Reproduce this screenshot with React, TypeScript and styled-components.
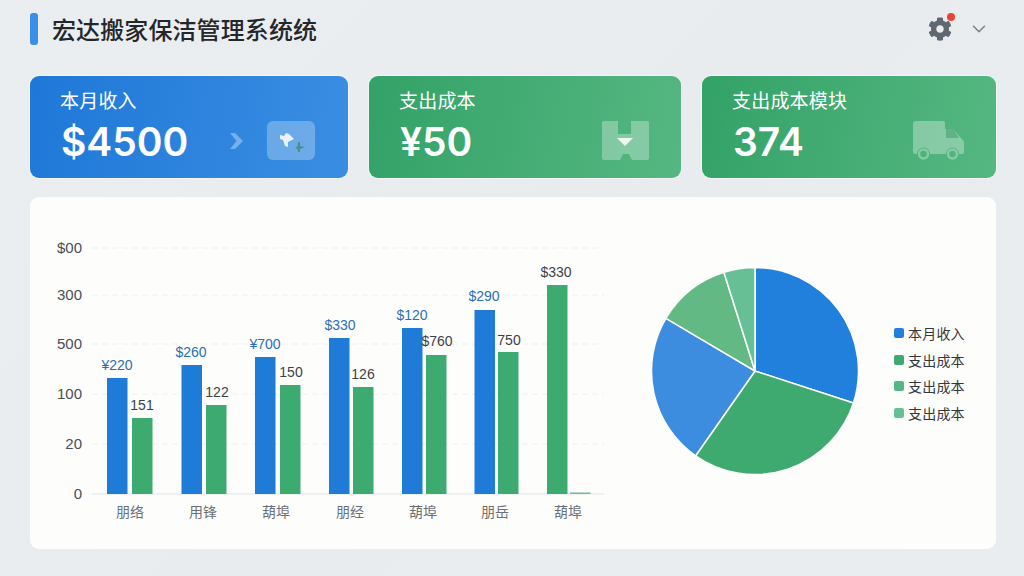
import styled, {createGlobalStyle} from "styled-components";
import {ChevronDown} from "lucide-react";
import {FaCog} from "react-icons/fa";

const GlobalStyle = createGlobalStyle`
  html, body {
    margin: 0;
    padding: 0;
    background: #e9edf0;
  }
`;

const FONT = `Inter, "Noto Sans CJK SC", sans-serif`;
const CJK = `"Noto Sans CJK SC", sans-serif`;
const CHART = `"Liberation Sans", "Noto Sans CJK SC", sans-serif`;

const Page = styled.div`
  width: 1024px;
  height: 576px;
  box-sizing: border-box;
  overflow: hidden;
  padding: 0 28px 27px 30px;
  display: flex;
  flex-direction: column;
  background: linear-gradient(135deg, #ebeef1 0%, #e8ecef 50%, #eaedf0 100%);
  font-family: ${FONT};
`;

const TopBar = styled.header`
  height: 58px;
  flex: none;
  display: flex;
  align-items: center;
  margin-bottom: 18px;
`;

const TitleMark = styled.span`
  width: 8px;
  height: 32px;
  border-radius: 3px;
  background: #3b8fe6;
  margin-right: 14px;
`;

const Title = styled.h1`
  margin: 0;
  font-family: ${CJK};
  font-size: 24px;
  font-weight: 500;
  line-height: 32px;
  letter-spacing: 0.1px;
  color: #23272b;
`;

const TopActions = styled.div`
  margin-left: auto;
  display: flex;
  align-items: center;
  gap: 15px;
  padding-right: 6px;
  color: #7a8087;
`;

const GearWrap = styled.div`
  position: relative;
  width: 26px;
  height: 26px;
  display: flex;
  align-items: center;
  justify-content: center;
  font-size: 24px;
  color: #5f6870;
`;

const Badge = styled.span`
  position: absolute;
  top: -3px;
  right: -2px;
  width: 8px;
  height: 8px;
  border-radius: 50%;
  background: #ea4335;
`;

const CardRow = styled.section`
  display: grid;
  grid-template-columns: 318px 312px 294px;
  gap: 21px;
  margin-bottom: 19px;
`;

const Card = styled.article<{$tone: "blue" | "green"; $inset: number}>`
  height: 102px;
  box-sizing: border-box;
  padding: 0 ${(p) => p.$inset}px 0 30px;
  display: flex;
  justify-content: space-between;
  border-radius: 9px;
  color: #fff;
  background: ${(p) =>
    p.$tone === "blue"
      ? "linear-gradient(100deg, #1f78d8 0%, #3a8ee2 100%)"
      : "linear-gradient(100deg, #33a267 0%, #55b781 100%)"};
  box-shadow: 0 0 0 1px rgba(255, 255, 255, 0.45);
`;

const CardText = styled.div`
  display: flex;
  flex-direction: column;
  padding-top: 10px;
`;

const CardLabel = styled.div`
  font-family: ${CJK};
  font-size: 19px;
  line-height: 28px;
  font-weight: 400;
  letter-spacing: 0.2px;
`;

const CardValue = styled.div`
  font-size: 39px;
  line-height: 48px;
  font-weight: 600;
  margin-top: 4px;
  margin-left: 1px;
`;

const CardIcons = styled.div`
  display: flex;
  align-items: center;
  gap: 24px;
  margin-top: 45px;
  height: 39px;
`;

const CardIcon = styled.svg`
  display: block;
  flex: none;
`;

const ChartPanel = styled.section`
  flex: 1;
  min-height: 0;
  display: flex;
  align-items: flex-start;
  border-radius: 9px;
  background: #fdfdfc;
`;

const BarSvg = styled.svg`
  display: block;
  flex: none;
  margin-top: 40px;
`;

const PieSvg = styled.svg`
  display: block;
  flex: none;
  margin: 69px 0 0 30px;
`;

const Legend = styled.ul`
  list-style: none;
  margin: 126px 0 0 34px;
  padding: 0;
  display: flex;
  flex-direction: column;
  gap: 6.5px;
`;

const LegendItem = styled.li`
  display: flex;
  align-items: center;
  gap: 4px;
  height: 20px;
  font-family: ${CJK};
  font-size: 14px;
  letter-spacing: 0.2px;
  color: #33383d;
`;

const Swatch = styled.span<{$color: string}>`
  width: 10px;
  height: 10px;
  border-radius: 2px;
  background: ${(p) => p.$color};
`;

const AxisLabel = styled.text`
  font-family: ${CHART};
  font-size: 15px;
  fill: #4a4f55;
  text-anchor: end;
`;

const CategoryLabel = styled.text`
  font-family: ${CJK};
  font-size: 14px;
  fill: #6a7076;
  text-anchor: middle;
`;

const ValueLabel = styled.text<{$blue?: boolean}>`
  font-family: ${CHART};
  font-size: 14px;
  fill: ${(p) => (p.$blue ? "#2a6fb5" : "#3c4146")};
  text-anchor: middle;
`;

const BLUE = "#1f7bd8";
const GREEN = "#3dab70";

// chart coordinates are relative to the panel corner (30, 197) of the page
const axisBottom = 297;
const axisTicks = [
  {label: "$00", y: 51},
  {label: "300", y: 98},
  {label: "500", y: 147},
  {label: "100", y: 197},
  {label: "20", y: 247},
  {label: "0", y: 297},
];

const bars = [
  {x: 77, top: 181, color: BLUE},
  {x: 102, top: 221, color: GREEN},
  {x: 151.5, top: 168, color: BLUE},
  {x: 176, top: 208, color: GREEN},
  {x: 225, top: 160, color: BLUE},
  {x: 250, top: 188, color: GREEN},
  {x: 299, top: 141, color: BLUE},
  {x: 323, top: 190, color: GREEN},
  {x: 372, top: 131, color: BLUE},
  {x: 396, top: 158, color: GREEN},
  {x: 444.5, top: 113, color: BLUE},
  {x: 468, top: 155, color: GREEN},
  {x: 517, top: 88, color: GREEN},
  {x: 540, top: 295.5, color: "#6cc094"},
];

const values = [
  {text: "¥220", x: 87, y: 173, blue: true},
  {text: "151", x: 112, y: 213},
  {text: "$260", x: 161, y: 160, blue: true},
  {text: "122", x: 187, y: 200},
  {text: "¥700", x: 235, y: 152, blue: true},
  {text: "150", x: 261, y: 180},
  {text: "$330", x: 310, y: 133, blue: true},
  {text: "126", x: 333, y: 182},
  {text: "$120", x: 382, y: 123, blue: true},
  {text: "$760", x: 407, y: 149},
  {text: "$290", x: 454, y: 104, blue: true},
  {text: "750", x: 479, y: 148},
  {text: "$330", x: 526, y: 80},
];

const categories = [
  {text: "朋络", x: 100},
  {text: "用锋", x: 173},
  {text: "葫埠", x: 246},
  {text: "朋经", x: 320},
  {text: "葫埠", x: 393},
  {text: "朋岳", x: 465},
  {text: "葫埠", x: 538},
];

const BarChart = () => (
  <BarSvg width={590} height={330} viewBox="0 40 590 330">
    {axisTicks.map((t) => (
      <g key={t.label}>
        <AxisLabel x={52} y={t.y + 5}>
          {t.label}
        </AxisLabel>
        {t.y !== axisBottom && (
          <line
            x1={62}
            x2={574}
            y1={t.y}
            y2={t.y}
            stroke="#f0f1ee"
            strokeDasharray="6 4"
          />
        )}
      </g>
    ))}
    <line x1={62} x2={574} y1={axisBottom} y2={axisBottom} stroke="#dfe3e6" />
    {bars.map((b) => (
      <rect
        key={b.x}
        x={b.x}
        y={b.top}
        width={20.5}
        height={axisBottom - b.top}
        fill={b.color}
      />
    ))}
    {values.map((v) => (
      <ValueLabel key={v.x} x={v.x} y={v.y} $blue={v.blue}>
        {v.text}
      </ValueLabel>
    ))}
    {categories.map((c) => (
      <CategoryLabel key={c.x} x={c.x} y={320}>
        {c.text}
      </CategoryLabel>
    ))}
  </BarSvg>
);

const slices = [
  {from: 0, to: 108, color: "#2180dc"},
  {from: 108, to: 215, color: "#3eaa70"},
  {from: 215, to: 300.6, color: "#3c8ce0"},
  {from: 300.6, to: 342.5, color: "#62b983"},
  {from: 342.5, to: 360, color: "#67c095"},
];

const slicePath = (from: number, to: number, r: number, c: number) => {
  const point = (deg: number) => {
    const a = (deg * Math.PI) / 180;
    return `${c + r * Math.sin(a)} ${c - r * Math.cos(a)}`;
  };
  const large = to - from > 180 ? 1 : 0;
  return `M${c} ${c} L${point(from)} A${r} ${r} 0 ${large} 1 ${point(to)} Z`;
};

const PieChart = () => (
  <PieSvg width={210} height={210} viewBox="0 0 210 210">
    {slices.map((s) => (
      <path
        key={s.from}
        d={slicePath(s.from, s.to, 103.5, 105)}
        fill={s.color}
        stroke="#fdfdfc"
        strokeWidth={1.5}
      />
    ))}
  </PieSvg>
);

const legend = [
  {label: "本月收入", color: "#2180dc"},
  {label: "支出成本", color: "#3eaa70"},
  {label: "支出成本", color: "#54b585"},
  {label: "支出成本", color: "#67c095"},
];

const PlaneTile = () => (
  <CardIcon width={48} height={39} viewBox="0 0 48 39">
    <rect width={48} height={39} rx={6} fill="#fff" fillOpacity={0.27} />
    <path d="M13 14l4 1 2-3 3 1 5 5-6 3v5l-3-1-2-6-3-1z" fill="#fff" fillOpacity={0.85} />
    <path d="M31 21h2v4l5 1-5 2v3h-2l-.5-3-2.500-1 2.500-1.500z" fill="#4d8f88" />
  </CardIcon>
);

const BoxTile = () => (
  <CardIcon width={47} height={39} viewBox="0 0 47 39">
    <path
      d="M2 0h14v13h13V0h16a2 2 0 0 1 2 2v35a2 2 0 0 1-2 2H30l-3-6h-6l-3 6H2a2 2 0 0 1-2-2V2a2 2 0 0 1 2-2z"
      fill="#fff"
      fillOpacity={0.3}
    />
    <path d="M15 17h16l-8 8z" fill="#fff" fillOpacity={0.85} />
  </CardIcon>
);

const TruckTile = () => (
  <CardIcon width={52} height={39} viewBox="0 0 52 39">
    <path
      d="M3 0h27a2 2 0 0 1 2 2v6h8l11 12.500V31a2 2 0 0 1-2 2h-3a6.500 6.500 0 0 0-13 0H17a6.500 6.500 0 0 0-13 0H2a2 2 0 0 1-2-2V3a3 3 0 0 1 3-3z"
      fill="#fff"
      fillOpacity={0.32}
    />
    <path d="M33 8h7l6 9H33z" fill="#3f9f6e" fillOpacity={0.55} />
    <circle cx={10.5} cy={33} r={4.5} fill="none" stroke="#fff" strokeOpacity={0.32} strokeWidth={2.5} />
    <circle cx={39.5} cy={33} r={4.5} fill="none" stroke="#fff" strokeOpacity={0.32} strokeWidth={2.5} />
  </CardIcon>
);

const Arrow = () => (
  <CardIcon width={13} height={16} viewBox="0 0 13 16">
    <path d="M0 0h5l8 8-8 8H0l6.500-8z" fill="#72b1ec" />
  </CardIcon>
);

export default function App() {
  return (
    <Page>
      <GlobalStyle />
      <TopBar>
        <TitleMark />
        <Title>宏达搬家保洁管理系统统</Title>
        <TopActions>
          <GearWrap>
            <FaCog />
            <Badge />
          </GearWrap>
          <ChevronDown size={22} strokeWidth={1.6} />
        </TopActions>
      </TopBar>
      <CardRow>
        <Card $tone="blue" $inset={33}>
          <CardText>
            <CardLabel>本月收入</CardLabel>
            <CardValue>$4500</CardValue>
          </CardText>
          <CardIcons>
            <Arrow />
            <PlaneTile />
          </CardIcons>
        </Card>
        <Card $tone="green" $inset={32}>
          <CardText>
            <CardLabel>支出成本</CardLabel>
            <CardValue>¥50</CardValue>
          </CardText>
          <CardIcons>
            <BoxTile />
          </CardIcons>
        </Card>
        <Card $tone="green" $inset={31}>
          <CardText>
            <CardLabel>支出成本模块</CardLabel>
            <CardValue>374</CardValue>
          </CardText>
          <CardIcons>
            <TruckTile />
          </CardIcons>
        </Card>
      </CardRow>
      <ChartPanel>
        <BarChart />
        <PieChart />
        <Legend>
          {legend.map((l, i) => (
            <LegendItem key={i}>
              <Swatch $color={l.color} />
              {l.label}
            </LegendItem>
          ))}
        </Legend>
      </ChartPanel>
    </Page>
  );
}
